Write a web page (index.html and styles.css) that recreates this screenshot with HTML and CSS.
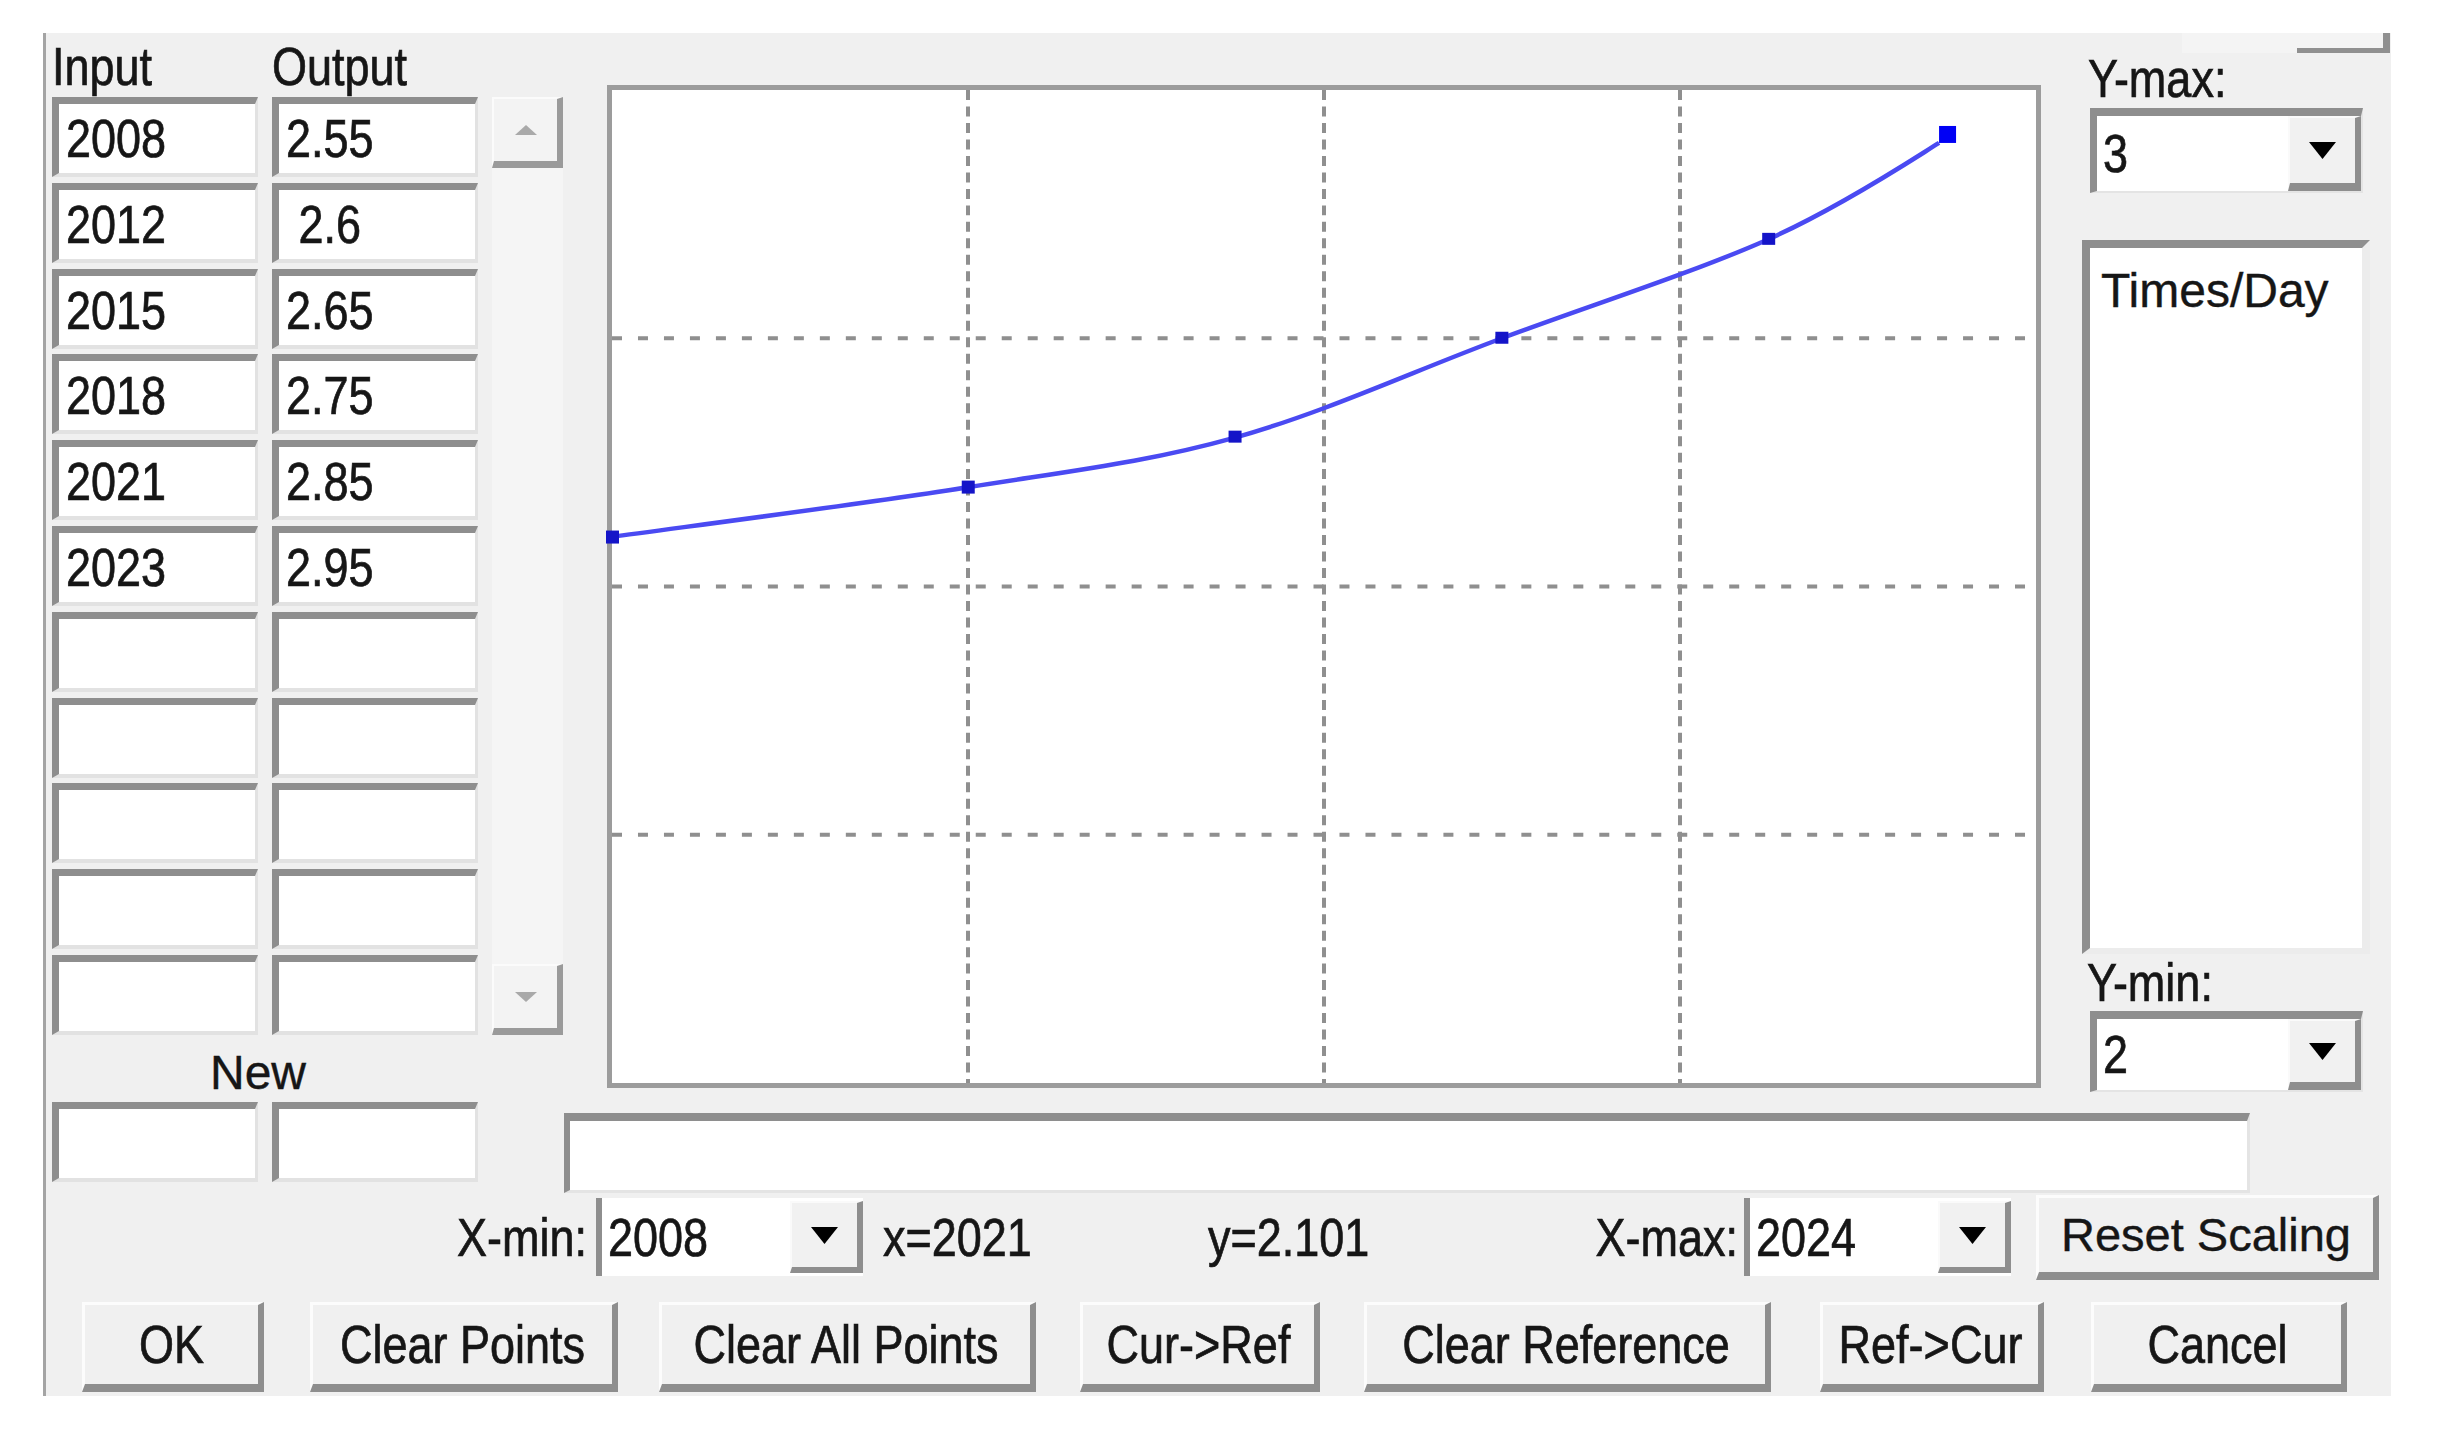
FILE: index.html
```html
<!DOCTYPE html>
<html>
<head>
<meta charset="utf-8">
<title>Curve Editor</title>
<link rel="stylesheet" href="styles.css">
</head>
<body>
<div class="dialog">
  <div class="clipbtn"></div>
  <div class="top">
    <div class="left">
      <div class="hdr">
        <div class="hcell"><span class="tx">Input</span></div>
        <div class="hcell"><span class="tx">Output</span></div>
      </div>
      <div class="tablewrap">
        <div class="cells">
          <div class="edit"><span class="tx">2008</span></div><div class="edit"><span class="tx">2.55</span></div>
          <div class="edit"><span class="tx">2012</span></div><div class="edit"><span class="tx"> 2.6</span></div>
          <div class="edit"><span class="tx">2015</span></div><div class="edit"><span class="tx">2.65</span></div>
          <div class="edit"><span class="tx">2018</span></div><div class="edit"><span class="tx">2.75</span></div>
          <div class="edit"><span class="tx">2021</span></div><div class="edit"><span class="tx">2.85</span></div>
          <div class="edit"><span class="tx">2023</span></div><div class="edit"><span class="tx">2.95</span></div>
          <div class="edit"></div><div class="edit"></div>
          <div class="edit"></div><div class="edit"></div>
          <div class="edit"></div><div class="edit"></div>
          <div class="edit"></div><div class="edit"></div>
          <div class="edit"></div><div class="edit"></div>
        </div>
        <div class="vscroll">
          <div class="sbtn"><svg width="22" height="10" viewBox="0 0 22 10"><polygon points="0,10 22,10 11,0" fill="#a9a9a9"/></svg></div>
          <div class="track"></div>
          <div class="sbtn"><svg width="22" height="10" viewBox="0 0 22 10"><polygon points="0,0 22,0 11,10" fill="#a9a9a9"/></svg></div>
        </div>
      </div>
      <div class="newlbl"><span class="tx2">New</span></div>
      <div class="newrow">
        <div class="edit"></div><div class="edit"></div>
      </div>
    </div>
    <div class="mid">
      <div class="upper">
        <div class="plot">
          <svg class="chart" width="1424" height="993" viewBox="0 0 1425 994" preserveAspectRatio="none">
            <g stroke="#8f8f8f" stroke-width="4" fill="none">
              <line x1="0" y1="248.5" x2="1425" y2="248.5" stroke-dasharray="10 16"/>
              <line x1="0" y1="497" x2="1425" y2="497" stroke-dasharray="10 16"/>
              <line x1="0" y1="745.5" x2="1425" y2="745.5" stroke-dasharray="10 16"/>
              <line x1="356.25" y1="0" x2="356.25" y2="994" stroke-dasharray="10 6.5"/>
              <line x1="712.5" y1="0" x2="712.5" y2="994" stroke-dasharray="10 6.5"/>
              <line x1="1068.75" y1="0" x2="1068.75" y2="994" stroke-dasharray="10 6.5"/>
            </g>
            <path d="M0 447.3 C59.4 439 252.4 414.2 356.3 397.6 C460.2 381 534.4 372.8 623.4 347.9 C712.5 323.1 801.5 281.6 890.6 248.5 C979.7 215.4 1083.6 182.2 1157.8 149.1 C1232 116 1306.2 66.3 1328 53" fill="none" stroke="#4a4af2" stroke-width="4.5"/>
            <g fill="#1414c8">
              <rect x="-6" y="441" width="13" height="13"/>
              <rect x="350" y="391" width="13" height="13"/>
              <rect x="617" y="341" width="13" height="12"/>
              <rect x="884" y="242" width="13" height="12"/>
              <rect x="1151" y="143" width="13" height="12"/>
            </g>
            <rect x="1328" y="36" width="17" height="17" fill="#0000f5"/>
          </svg>
        </div>
        <div class="right">
          <div class="lbl ymax"><span class="tx">Y-max:</span></div>
          <div class="combo">
            <span class="tx">3</span>
            <div class="drop"><svg width="27" height="17" viewBox="0 0 27 17"><polygon points="0,0 27,0 13.5,17" fill="#000"/></svg></div>
          </div>
          <div class="listbox"><span class="tx2">Times/Day</span></div>
          <div class="lbl ymin"><span class="tx">Y-min:</span></div>
          <div class="combo short">
            <span class="tx">2</span>
            <div class="drop"><svg width="27" height="17" viewBox="0 0 27 17"><polygon points="0,0 27,0 13.5,17" fill="#000"/></svg></div>
          </div>
        </div>
      </div>
      <div class="status"></div>
    </div>
  </div>
  <div class="coord">
    <div class="clbl xmin"><span class="tx">X-min:</span></div>
    <div class="combo2">
      <span class="tx">2008</span>
      <div class="drop2"><svg width="27" height="17" viewBox="0 0 27 17"><polygon points="0,0 27,0 13.5,17" fill="#000"/></svg></div>
    </div>
    <div class="cval xval"><span class="tx">x=2021</span></div>
    <div class="cval yval"><span class="tx">y=2.101</span></div>
    <div class="clbl xmax"><span class="tx">X-max:</span></div>
    <div class="combo2">
      <span class="tx">2024</span>
      <div class="drop2"><svg width="27" height="17" viewBox="0 0 27 17"><polygon points="0,0 27,0 13.5,17" fill="#000"/></svg></div>
    </div>
    <div class="btn reset"><span class="tx2 rs">Reset Scaling</span></div>
  </div>
  <div class="btnrow">
    <div class="btn b-ok"><span class="tx">OK</span></div>
    <div class="btn b-cp"><span class="tx">Clear Points</span></div>
    <div class="btn b-cap"><span class="tx">Clear All Points</span></div>
    <div class="btn b-cr"><span class="tx">Cur-&gt;Ref</span></div>
    <div class="btn b-cref"><span class="tx">Clear Reference</span></div>
    <div class="btn b-rc"><span class="tx">Ref-&gt;Cur</span></div>
    <div class="btn b-cancel"><span class="tx">Cancel</span></div>
  </div>
</div>
</body>
</html>
```

FILE: styles.css
```css
html, body {
  margin: 0;
  padding: 0;
  background: #ffffff;
}

body {
  width: 2438px;
  height: 1436px;
  overflow: hidden;
  font-family: "Liberation Sans", Arial, sans-serif;
  color: #111111;
}

.dialog {
  position: relative;
  box-sizing: border-box;
  margin: 33px 0 0 43px;
  width: 2348px;
  height: 1363px;
  background: #f0f0f0;
  border-left: 3px solid #a4a4a4;
  padding-bottom: 4px;
}

.tx {
  display: inline-block;
  font-size: 45px;
  line-height: 1;
  white-space: pre;
  transform: scaleY(1.2);
  color: #161616;
  -webkit-text-stroke: 0.6px #161616;
}

.tx2 {
  display: inline-block;
  font-size: 48px;
  line-height: 1;
  white-space: pre;
  color: #161616;
  -webkit-text-stroke: 0.4px #161616;
}

.tx2.rs {
  font-size: 47px;
}

/* clipped button at the top edge */
.clipbtn {
  position: absolute;
  top: 0;
  left: 2136px;
  width: 208px;
  height: 20px;
  box-sizing: border-box;
  background: #f4f4f4;
  border-right: 7px solid #909090;
}

.clipbtn::after {
  content: "";
  position: absolute;
  left: 115px;
  right: 0;
  bottom: 0;
  height: 5px;
  background: #909090;
}

.top {
  display: flex;
  height: 1160px;
}

/* left panel */
.left {
  width: 518px;
  box-sizing: border-box;
  padding-left: 6px;
  display: flex;
  flex-direction: column;
}

.hdr {
  height: 64px;
  display: grid;
  grid-template-columns: 206px 206px;
  column-gap: 14px;
}

.hcell {
  display: flex;
  align-items: center;
  padding-top: 2px;
}

.tablewrap {
  display: flex;
  height: 938px;
}

.cells {
  display: grid;
  grid-template-columns: 206px 206px;
  grid-template-rows: repeat(11, 80px);
  column-gap: 14px;
  row-gap: 5.8px;
}

.edit {
  box-sizing: border-box;
  height: 80px;
  background: #ffffff;
  border-top: 7px solid #8e8e8e;
  border-left: 7px solid #8e8e8e;
  border-right: 3px solid #e2e2e2;
  border-bottom: 4px solid #e2e2e2;
  padding-left: 7px;
  display: flex;
  align-items: center;
}

.vscroll {
  margin-left: 14px;
  width: 71px;
  display: flex;
  flex-direction: column;
  background: #f5f5f5;
}

.sbtn {
  box-sizing: border-box;
  height: 71px;
  background: #f3f3f3;
  border-top: 2px solid #fbfbfb;
  border-left: 2px solid #fbfbfb;
  border-right: 6px solid #9a9a9a;
  border-bottom: 7px solid #9a9a9a;
  display: flex;
  align-items: center;
  justify-content: center;
}

.track {
  flex: 1;
}

.newlbl {
  box-sizing: border-box;
  height: 67px;
  width: 426px;
  padding-top: 9px;
  padding-right: 14px;
  display: flex;
  align-items: center;
  justify-content: center;
}

.newrow {
  display: grid;
  grid-template-columns: 206px 206px;
  column-gap: 14px;
  height: 80px;
}

/* middle + right */
.mid {
  flex: 1;
  display: flex;
  flex-direction: column;
}

.upper {
  display: flex;
  height: 1059px;
}

.plot {
  box-sizing: border-box;
  margin-left: 43px;
  margin-top: 52px;
  width: 1434px;
  height: 1003px;
  background: #ffffff;
  border: 5px solid #9c9c9c;
}

.chart {
  display: block;
  overflow: visible;
}

.right {
  margin-left: 41px;
  width: 288px;
  display: flex;
  flex-direction: column;
}

.lbl {
  display: flex;
  align-items: center;
  padding-left: 6px;
}

.lbl.ymax {
  box-sizing: border-box;
  height: 75px;
  padding-top: 15px;
}

.lbl.ymin {
  height: 57px;
  padding-left: 5px;
}

.combo {
  box-sizing: border-box;
  margin-left: 8px;
  width: 273px;
  height: 85px;
  background: #ffffff;
  border-top: 8px solid #8e8e8e;
  border-left: 7px solid #8e8e8e;
  border-right: 2px solid #e4e4e4;
  border-bottom: 2px solid #e4e4e4;
  padding-left: 6px;
  display: flex;
  align-items: center;
}

.combo.short {
  height: 81px;
}

.drop {
  box-sizing: border-box;
  margin-left: auto;
  width: 73px;
  align-self: stretch;
  background: #f1f1f1;
  border-top: 2px solid #fafafa;
  border-left: 2px solid #fafafa;
  border-right: 6px solid #8e8e8e;
  border-bottom: 8px solid #8e8e8e;
  display: flex;
  align-items: center;
  justify-content: center;
}

.listbox {
  box-sizing: border-box;
  margin-top: 47px;
  width: 288px;
  height: 714px;
  background: #ffffff;
  border-top: 8px solid #8e8e8e;
  border-left: 8px solid #8e8e8e;
  border-right: 8px solid #ececec;
  border-bottom: 6px solid #ececec;
  padding: 19px 0 0 11px;
}

.status {
  box-sizing: border-box;
  margin-top: 21px;
  width: 1686px;
  height: 80px;
  background: #ffffff;
  border-top: 8px solid #8e8e8e;
  border-left: 6px solid #8e8e8e;
  border-right: 3px solid #e4e4e4;
  border-bottom: 3px solid #e4e4e4;
}

/* coordinate row */
.coord {
  height: 88px;
  display: flex;
  align-items: center;
}

.clbl {
  box-sizing: border-box;
  display: flex;
  justify-content: flex-end;
  align-items: center;
  padding-right: 9px;
}

.clbl.xmin {
  margin-left: 413px;
  width: 137px;
}

.clbl.xmax {
  width: 154px;
  padding-right: 6px;
}

.combo2 {
  box-sizing: border-box;
  width: 267px;
  height: 78px;
  background: #ffffff;
  border-left: 6px solid #8e8e8e;
  padding-left: 6px;
  display: flex;
  align-items: center;
}

.drop2 {
  box-sizing: border-box;
  margin-left: auto;
  margin-top: 3px;
  margin-bottom: 3px;
  width: 73px;
  align-self: stretch;
  background: #f1f1f1;
  border-top: 2px solid #fafafa;
  border-left: 2px solid #fafafa;
  border-right: 6px solid #8e8e8e;
  border-bottom: 6px solid #8e8e8e;
  display: flex;
  align-items: center;
  justify-content: center;
}

.cval {
  display: flex;
  align-items: center;
}

.cval.xval {
  margin-left: 20px;
  width: 325px;
}

.cval.yval {
  width: 382px;
}

/* buttons */
.btn {
  box-sizing: border-box;
  background: #f0f0f0;
  border-top: 3px solid #fcfcfc;
  border-left: 3px solid #fcfcfc;
  border-right: 6px solid #8e8e8e;
  border-bottom: 8px solid #8e8e8e;
  display: flex;
  align-items: center;
  justify-content: center;
}

.btn.reset {
  margin-left: 25px;
  width: 343px;
  height: 85px;
}

.btnrow {
  margin-top: 21px;
  height: 90px;
  display: flex;
}

.btnrow .btn {
  height: 90px;
}

.b-ok { margin-left: 36px; width: 182px; }
.b-cp { margin-left: 46px; width: 308px; }
.b-cap { margin-left: 41px; width: 377px; }
.b-cr { margin-left: 44px; width: 240px; }
.b-cref { margin-left: 44px; width: 407px; }
.b-rc { margin-left: 49px; width: 224px; }
.b-cancel { margin-left: 47px; width: 256px; }
```
